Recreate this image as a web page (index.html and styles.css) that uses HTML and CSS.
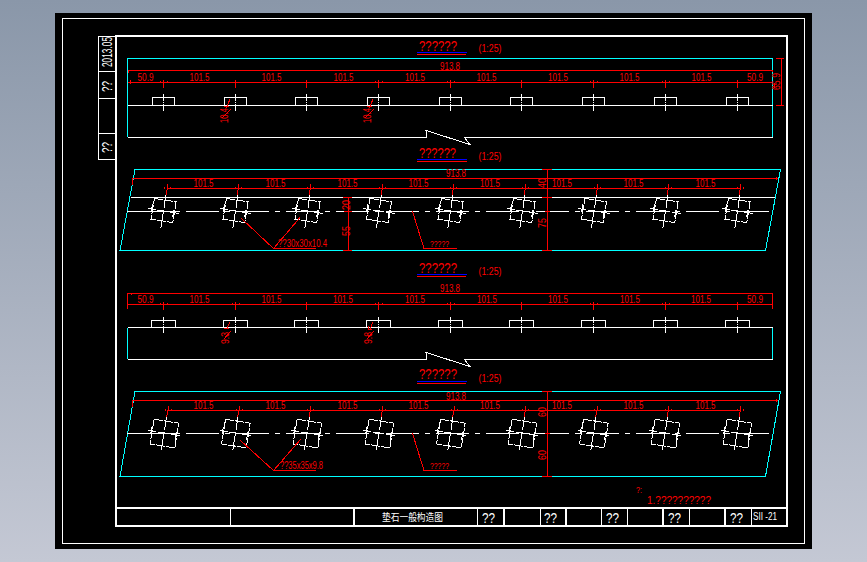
FILE: index.html
```html
<!DOCTYPE html>
<html lang="en">

<head>
    <meta charset="utf-8">
    <title>垫石一般构造图</title>
    <link rel="stylesheet" href="styles.css">
</head>

<body>
    <div class="sheet">
        <svg class="drawing" viewBox="55 13 757 536" width="757" height="536">
            <defs>
                <!-- elevation plate, small and wide -->
                <g id="plateA">
                    <path class="wh" d="M-11 8V0H11V8" />
                    <path class="wh" d="M0 -3.500V3M0 4.500V5.500M0 6.500V13" />
                </g>
                <g id="plateB">
                    <path class="wh" d="M-12 7V0H12V7" />
                    <path class="wh" d="M0 -4V2M0 3V4M0 5V12" />
                </g>
                <!-- plan plates, rotated with the skew of the deck -->
                <g id="planA">
                    <g transform="rotate(9)">
                        <rect class="wh dashed" x="-11" y="-11" width="22" height="21" />
                        <path class="wh" d="M0 -16V-3M0 -1V17M-16 0H-8M-6 0H5M7 0H16" />
                        <path class="wh" d="M-12 -5V3M10 -3V5" />
                    </g>
                </g>
                <g id="planB">
                    <g transform="rotate(9)">
                        <rect class="wh dashed" x="-12" y="-12" width="25" height="25" />
                        <path class="wh" d="M0 -16V-3M0 -1V17M-16 0H-8M-6 0H5M7 0H16" />
                        <path class="wh" d="M-13 -4V3M12 -3V5" />
                    </g>
                </g>
                <!-- dimension ticks -->
                <path id="tick" class="rd" d="M0 -2V6" />
                <path id="tickX" class="rd" d="M0 -2V6M-3.500 -1V1M3.500 -1V1" />
                <path id="skew" class="rd" d="M0 -4V0L-1.500 7M-3 -1V1M3 -1V1" />
            </defs>

            <!-- frames -->
            <rect class="wh" x="62.500" y="18.500" width="742" height="525" />
            <rect class="wh thick" x="116" y="36" width="671" height="490" />
            <path class="wh thick" d="M116 508H787" />
            <path class="wh" d="M230.500 508V526M477.500 508V526M540.500 508V526M601.500 508V526M627.500 508V526M689.500 508V526M751.500 508V526" />
            <path class="wh thick" d="M354 508V526M504 508V526M566 508V526M663 508V526M725 508V526" />

            <!-- side tab -->
            <rect class="wh" x="98.500" y="36.500" width="17" height="123" />
            <path class="wh" d="M98.500 71.500H115M98.500 98.500H115M98.500 133.500H115" />
            <text class="t-wh t-q" transform="translate(112 67) rotate(-90)" textLength="30" lengthAdjust="spacingAndGlyphs">2013.05</text>
            <text class="t-wh t-q" transform="translate(112 92) rotate(-90)" textLength="11" lengthAdjust="spacingAndGlyphs">??</text>
            <text class="t-wh t-q" transform="translate(112 153) rotate(-90)" textLength="11" lengthAdjust="spacingAndGlyphs">??</text>

            <!-- section 1 -->
            <text class="t-rd t-q" x="419" y="50.500" textLength="38" lengthAdjust="spacingAndGlyphs">??????</text>
            <path class="bl" d="M417 52.500H467" />
            <path class="rd" d="M417 54.500H466" />
            <text class="t-rd" x="478.500" y="52" textLength="23" lengthAdjust="spacingAndGlyphs">(1:25)</text>
            <path class="cy" d="M127.500 137V58.500H772.500V137" />
            <path class="wh" d="M127.500 137.500H427L426 130.500L470 144.500L464.500 137.500H772.500" />
            <path class="wh" d="M127.500 105.500H772.500" />
            <path class="rd" d="M128 70.500H772M128 82.500H772M128 70V73M130 80V84M772 70V72" />
            <path class="rd" d="M776 58.500H784M781.500 58.500V105.500M776 105.500H784M774 82.500V88" />
            <use href="#tickX" x="163.500" y="82" /><use href="#tick" x="235.500" y="82" /><use href="#tick" x="306.500" y="82" />
            <use href="#tickX" x="378.500" y="82" /><use href="#tickX" x="450.500" y="82" /><use href="#tick" x="521.500" y="82" />
            <use href="#tickX" x="593.500" y="82" /><use href="#tickX" x="665.500" y="82" /><use href="#tick" x="737.500" y="82" />
            <use href="#plateA" x="163.500" y="97.500" /><use href="#plateA" x="235.500" y="97.500" /><use href="#plateA" x="306.500" y="97.500" />
            <use href="#plateA" x="378.500" y="97.500" /><use href="#plateA" x="450.500" y="97.500" /><use href="#plateA" x="521.500" y="97.500" />
            <use href="#plateA" x="593.500" y="97.500" /><use href="#plateA" x="665.500" y="97.500" /><use href="#plateA" x="737.500" y="97.500" />
            <text class="t-rd" x="440" y="69.500" textLength="20" lengthAdjust="spacingAndGlyphs">913.8</text>
            <text class="t-rd" x="137.500" y="81" textLength="16" lengthAdjust="spacingAndGlyphs">50.9</text>
            <text class="t-rd" x="189.500" y="81" textLength="20" lengthAdjust="spacingAndGlyphs">101.5</text>
            <text class="t-rd" x="261.500" y="81" textLength="20" lengthAdjust="spacingAndGlyphs">101.5</text>
            <text class="t-rd" x="333.500" y="81" textLength="20" lengthAdjust="spacingAndGlyphs">101.5</text>
            <text class="t-rd" x="405" y="81" textLength="20" lengthAdjust="spacingAndGlyphs">101.5</text>
            <text class="t-rd" x="476.500" y="81" textLength="20" lengthAdjust="spacingAndGlyphs">101.5</text>
            <text class="t-rd" x="548" y="81" textLength="20" lengthAdjust="spacingAndGlyphs">101.5</text>
            <text class="t-rd" x="619.500" y="81" textLength="20" lengthAdjust="spacingAndGlyphs">101.5</text>
            <text class="t-rd" x="691.500" y="81" textLength="20" lengthAdjust="spacingAndGlyphs">101.5</text>
            <text class="t-rd" x="747" y="81" textLength="16" lengthAdjust="spacingAndGlyphs">50.9</text>
            <text class="t-rd" transform="translate(780 90) rotate(-90)" textLength="17" lengthAdjust="spacingAndGlyphs">65.9</text>
            <text class="t-rd" transform="translate(228 123) rotate(-90)" textLength="15" lengthAdjust="spacingAndGlyphs">10.4</text>
            <text class="t-rd" transform="translate(371 123) rotate(-90)" textLength="15" lengthAdjust="spacingAndGlyphs">10.4</text>
            <path class="rd" d="M230 99L226.500 108M224 106H229M231 109L222 118" />
            <path class="rd" d="M373 99L369.500 108M367 106H372M374 109L365 118" />

            <!-- section 2 -->
            <text class="t-rd t-q" x="419" y="157.500" textLength="37" lengthAdjust="spacingAndGlyphs">??????</text>
            <path class="bl" d="M417 159.500H467" />
            <path class="rd" d="M417 161.500H467" />
            <text class="t-rd" x="478.500" y="160" textLength="23" lengthAdjust="spacingAndGlyphs">(1:25)</text>
            <path class="cy" d="M135 169.500H780.500L765.500 250.500H120Z" />
            <path class="wh" d="M131 197.500H775" />
            <path class="wh" d="M127 211.500H180" />
            <path class="wh axis" d="M186 211.500H773" />
            <path class="rd" d="M133 178.500H778M132.500 178V185M776 177V180M167 188.500H740" />
            <path class="rd" d="M348.500 197.500V250.500M343 197.500H352M343 250.500H352M344 211.500H352" />
            <path class="rd" d="M547.500 169V250.500M542 169.500H552M542 197.500H552M542 250.500H552M545 211.500H550" />
            <use href="#skew" x="167.500" y="188" /><use href="#skew" x="238.500" y="188" /><use href="#skew" x="310.500" y="188" />
            <use href="#skew" x="382.500" y="188" /><use href="#skew" x="453.500" y="188" /><use href="#skew" x="525.500" y="188" />
            <use href="#skew" x="597.500" y="188" /><use href="#skew" x="668.500" y="188" /><use href="#skew" x="740.500" y="188" />
            <use href="#planA" x="163.500" y="211" /><use href="#planA" x="235.500" y="211" /><use href="#planA" x="307.500" y="211" />
            <use href="#planA" x="379" y="211" /><use href="#planA" x="450.500" y="211" /><use href="#planA" x="522.500" y="211" />
            <use href="#planA" x="594" y="211" /><use href="#planA" x="665.500" y="211" /><use href="#planA" x="737.500" y="211" />
            <text class="t-rd" x="446" y="177" textLength="20" lengthAdjust="spacingAndGlyphs">913.8</text>
            <text class="t-rd" x="193.500" y="186.500" textLength="20" lengthAdjust="spacingAndGlyphs">101.5</text>
            <text class="t-rd" x="265.500" y="186.500" textLength="20" lengthAdjust="spacingAndGlyphs">101.5</text>
            <text class="t-rd" x="337.500" y="186.500" textLength="20" lengthAdjust="spacingAndGlyphs">101.5</text>
            <text class="t-rd" x="408.500" y="186.500" textLength="20" lengthAdjust="spacingAndGlyphs">101.5</text>
            <text class="t-rd" x="480" y="186.500" textLength="20" lengthAdjust="spacingAndGlyphs">101.5</text>
            <text class="t-rd" x="552" y="186.500" textLength="20" lengthAdjust="spacingAndGlyphs">101.5</text>
            <text class="t-rd" x="623.500" y="186.500" textLength="20" lengthAdjust="spacingAndGlyphs">101.5</text>
            <text class="t-rd" x="695.500" y="186.500" textLength="20" lengthAdjust="spacingAndGlyphs">101.5</text>
            <text class="t-rd" transform="translate(350 210) rotate(-90)" textLength="10" lengthAdjust="spacingAndGlyphs">20</text>
            <text class="t-rd" transform="translate(350 236) rotate(-90)" textLength="10" lengthAdjust="spacingAndGlyphs">55</text>
            <text class="t-rd" transform="translate(546 188) rotate(-90)" textLength="10" lengthAdjust="spacingAndGlyphs">40</text>
            <text class="t-rd" transform="translate(546 228) rotate(-90)" textLength="10" lengthAdjust="spacingAndGlyphs">75</text>
            <path class="rd" d="M241.500 218.500L273.500 248.500H316M300 217.500L273.500 248.500" />
            <text class="t-rd" x="278" y="247" textLength="49" lengthAdjust="spacingAndGlyphs">??30x30x10.4</text>
            <path class="rd" d="M412.500 211.500L424 248.500H457" />
            <text class="t-rd t-small" x="430" y="246.500" textLength="19" lengthAdjust="spacingAndGlyphs">?????</text>

            <!-- section 3 -->
            <text class="t-rd t-q" x="419" y="272.500" textLength="38" lengthAdjust="spacingAndGlyphs">??????</text>
            <path class="bl" d="M417 274.500H467" />
            <path class="rd" d="M417 276.500H466" />
            <text class="t-rd" x="478.500" y="275" textLength="23" lengthAdjust="spacingAndGlyphs">(1:25)</text>
            <path class="cy" d="M127.500 328V359M772.500 328V359" />
            <path class="wh" d="M127.500 359.500H427L426 352.500L470 366.500L464.500 359.500H772.500" />
            <path class="wh" d="M127.500 327.500H772.500" />
            <path class="rd" d="M128 293.500H772M128 304.500H772M127.500 293V309M127.500 293.500H131V295M772.500 293V309" />
            <use href="#tickX" x="163.500" y="304" /><use href="#tickX" x="235.500" y="304" /><use href="#tick" x="306.500" y="304" />
            <use href="#tickX" x="378.500" y="304" /><use href="#tickX" x="450.500" y="304" /><use href="#tick" x="521.500" y="304" />
            <use href="#tickX" x="593.500" y="304" /><use href="#tickX" x="665.500" y="304" /><use href="#tick" x="737.500" y="304" />
            <use href="#plateB" x="163.500" y="320.500" /><use href="#plateB" x="235.500" y="320.500" /><use href="#plateB" x="306.500" y="320.500" />
            <use href="#plateB" x="378.500" y="320.500" /><use href="#plateB" x="450.500" y="320.500" /><use href="#plateB" x="521.500" y="320.500" />
            <use href="#plateB" x="593.500" y="320.500" /><use href="#plateB" x="665.500" y="320.500" /><use href="#plateB" x="737.500" y="320.500" />
            <text class="t-rd" x="440" y="291.500" textLength="20" lengthAdjust="spacingAndGlyphs">913.8</text>
            <text class="t-rd" x="137.500" y="302.500" textLength="16" lengthAdjust="spacingAndGlyphs">50.9</text>
            <text class="t-rd" x="189.500" y="302.500" textLength="20" lengthAdjust="spacingAndGlyphs">101.5</text>
            <text class="t-rd" x="261.500" y="302.500" textLength="20" lengthAdjust="spacingAndGlyphs">101.5</text>
            <text class="t-rd" x="333" y="302.500" textLength="20" lengthAdjust="spacingAndGlyphs">101.5</text>
            <text class="t-rd" x="405" y="302.500" textLength="20" lengthAdjust="spacingAndGlyphs">101.5</text>
            <text class="t-rd" x="477" y="302.500" textLength="20" lengthAdjust="spacingAndGlyphs">101.5</text>
            <text class="t-rd" x="548" y="302.500" textLength="20" lengthAdjust="spacingAndGlyphs">101.5</text>
            <text class="t-rd" x="620" y="302.500" textLength="20" lengthAdjust="spacingAndGlyphs">101.5</text>
            <text class="t-rd" x="691" y="302.500" textLength="20" lengthAdjust="spacingAndGlyphs">101.5</text>
            <text class="t-rd" x="747" y="302.500" textLength="16" lengthAdjust="spacingAndGlyphs">50.9</text>
            <text class="t-rd" transform="translate(229 344) rotate(-90)" textLength="12" lengthAdjust="spacingAndGlyphs">9.3</text>
            <text class="t-rd" transform="translate(372 344) rotate(-90)" textLength="12" lengthAdjust="spacingAndGlyphs">9.8</text>
            <path class="rd" d="M230 322L226.500 329M224 328H229M231 331L224 339" />
            <path class="rd" d="M373 322L370 329M368 326V329H372M374 331L367 339" />

            <!-- section 4 -->
            <text class="t-rd t-q" x="419" y="379" textLength="38" lengthAdjust="spacingAndGlyphs">??????</text>
            <path class="bl" d="M417 381.500H467" />
            <path class="rd" d="M417 383.500H466" />
            <text class="t-rd" x="478.500" y="381.500" textLength="23" lengthAdjust="spacingAndGlyphs">(1:25)</text>
            <path class="cy" d="M135 391.500H780.500L765.500 476.500H120Z" />
            <path class="wh" d="M127 433.500H180" />
            <path class="wh axis" d="M186 433.500H773" />
            <path class="rd" d="M133 400.500H778M132.500 400V407M776 399V402M168 410.500H740" />
            <path class="rd" d="M547.500 391V476.500M542 391.500H552M542 476.500H552M545 433.500H550" />
            <use href="#skew" x="168" y="410" /><use href="#skew" x="239" y="410" /><use href="#skew" x="310.500" y="410" />
            <use href="#skew" x="382.500" y="410" /><use href="#skew" x="454" y="410" /><use href="#skew" x="525.500" y="410" />
            <use href="#skew" x="597" y="410" /><use href="#skew" x="668.500" y="410" /><use href="#skew" x="740.500" y="410" />
            <use href="#planB" x="164" y="433" /><use href="#planB" x="235.500" y="433" /><use href="#planB" x="307" y="433" />
            <use href="#planB" x="379" y="433" /><use href="#planB" x="450.500" y="433" /><use href="#planB" x="522" y="433" />
            <use href="#planB" x="593.500" y="433" /><use href="#planB" x="665" y="433" /><use href="#planB" x="737" y="433" />
            <text class="t-rd" x="446" y="399.500" textLength="20" lengthAdjust="spacingAndGlyphs">913.8</text>
            <text class="t-rd" x="193.500" y="409" textLength="20" lengthAdjust="spacingAndGlyphs">101.5</text>
            <text class="t-rd" x="265.500" y="409" textLength="20" lengthAdjust="spacingAndGlyphs">101.5</text>
            <text class="t-rd" x="337.500" y="409" textLength="20" lengthAdjust="spacingAndGlyphs">101.5</text>
            <text class="t-rd" x="408.500" y="409" textLength="20" lengthAdjust="spacingAndGlyphs">101.5</text>
            <text class="t-rd" x="480" y="409" textLength="20" lengthAdjust="spacingAndGlyphs">101.5</text>
            <text class="t-rd" x="552" y="409" textLength="20" lengthAdjust="spacingAndGlyphs">101.5</text>
            <text class="t-rd" x="623.500" y="409" textLength="20" lengthAdjust="spacingAndGlyphs">101.5</text>
            <text class="t-rd" x="695.500" y="409" textLength="20" lengthAdjust="spacingAndGlyphs">101.5</text>
            <text class="t-rd" transform="translate(546 417) rotate(-90)" textLength="10" lengthAdjust="spacingAndGlyphs">60</text>
            <text class="t-rd" transform="translate(546 460) rotate(-90)" textLength="10" lengthAdjust="spacingAndGlyphs">60</text>
            <path class="rd" d="M240 440L273.500 470.500H316M300.500 439.500L273.500 470.500" />
            <text class="t-rd" x="280" y="469" textLength="43" lengthAdjust="spacingAndGlyphs">??35x35x9.8</text>
            <path class="rd" d="M412.500 433.500L424 470.500H457" />
            <text class="t-rd t-small" x="430" y="469" textLength="19" lengthAdjust="spacingAndGlyphs">?????</text>

            <!-- notes -->
            <text class="t-rd t-small" x="636" y="493" textLength="6" lengthAdjust="spacingAndGlyphs">?:</text>
            <text class="t-rd" x="647" y="504" textLength="64" lengthAdjust="spacingAndGlyphs">1.??????????</text>

            <!-- title block -->
            <text class="t-cjk" x="382" y="520.500" textLength="61" lengthAdjust="spacingAndGlyphs">垫石一般构造图</text>
            <text class="t-wh t-q" x="482" y="522.500" textLength="13" lengthAdjust="spacingAndGlyphs">??</text>
            <text class="t-wh t-q" x="544" y="522.500" textLength="13" lengthAdjust="spacingAndGlyphs">??</text>
            <text class="t-wh t-q" x="606" y="522.500" textLength="13" lengthAdjust="spacingAndGlyphs">??</text>
            <text class="t-wh t-q" x="668" y="522.500" textLength="13" lengthAdjust="spacingAndGlyphs">??</text>
            <text class="t-wh t-q" x="730" y="522.500" textLength="13" lengthAdjust="spacingAndGlyphs">??</text>
            <text class="t-wh" x="753" y="519.500" textLength="24" lengthAdjust="spacingAndGlyphs">SII -21</text>
        </svg>
    </div>
</body>

</html>
```

FILE: styles.css
```css
html,
body {
    margin: 0;
    height: 562px;
    overflow: hidden;
}

body {
    background: linear-gradient(#8a97a9, #c4c8d4);
    padding-top: 13px;
    box-sizing: border-box;
}

.sheet {
    width: 757px;
    height: 536px;
    margin-left: 55px;
    background-color: #000;
}

.drawing {
    display: block;
}

/* strokes */
.wh,
.cy,
.rd,
.bl {
    fill: none;
    stroke-width: 1;
    shape-rendering: crispEdges;
}

.wh {
    stroke: #fff;
}

.cy {
    stroke: #0ff;
}

.rd {
    stroke: #f00;
}

.bl {
    stroke: #00f;
}

.thick {
    stroke-width: 2;
}

.dashed {
    stroke-dasharray: 9 1;
}

.axis {
    stroke-dasharray: 33 6 5 6;
}

/* drawing text */
.t-rd,
.t-wh,
.t-cjk {
    font-family: "Liberation Sans", Arial, sans-serif;
    font-size: 10px;
}

.t-rd {
    fill: #f00;
}

.t-wh {
    fill: #fff;
}

.t-q {
    font-size: 15px;
}

.t-small {
    font-size: 9px;
}

.t-cjk {
    font-family: "Noto Sans CJK SC", sans-serif;
    fill: #fff;
}
```
